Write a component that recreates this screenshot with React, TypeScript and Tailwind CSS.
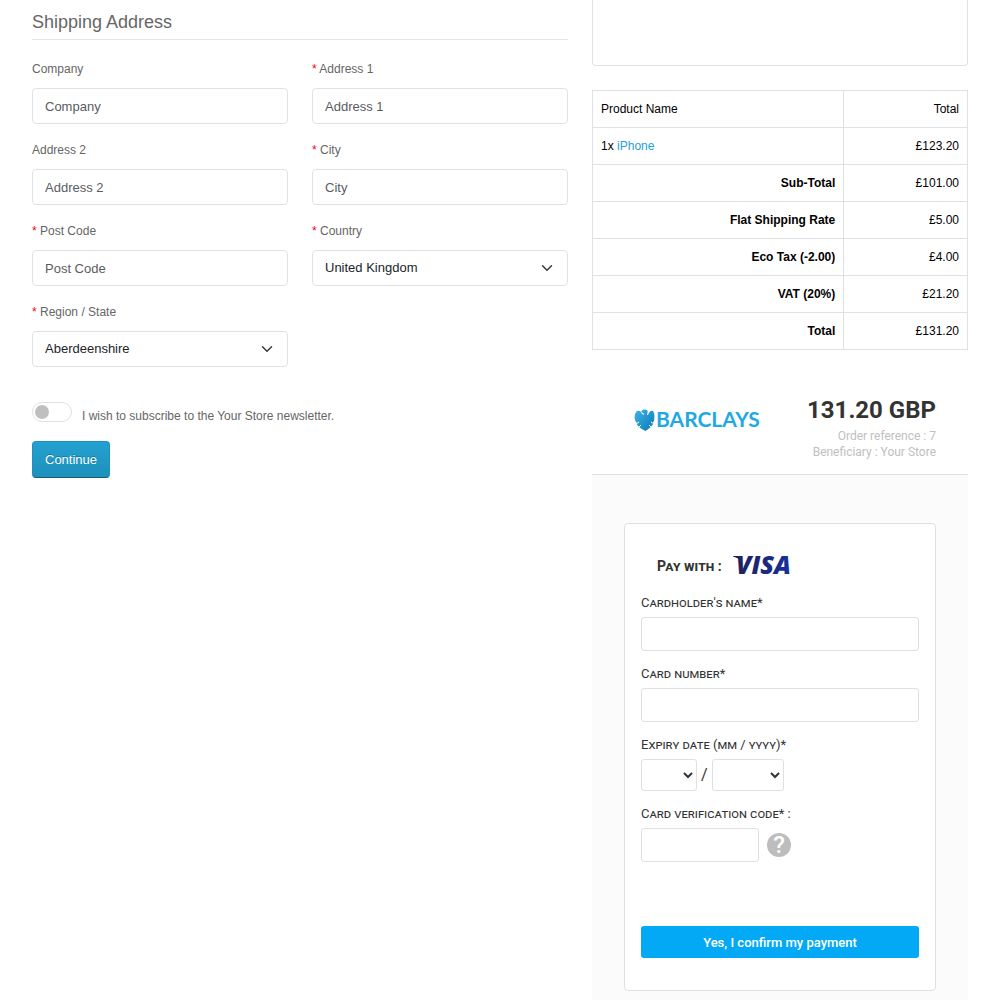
import { useState } from 'react';
import type { ReactNode } from 'react';

type FieldProps = {
  id: string;
  label: string;
  required?: boolean;
  children: ReactNode;
};

const controlClass =
  'block h-9 w-full rounded-sm border border-[#dee2e6] bg-white px-3 text-[13px] outline-none focus:border-[#86b7fe]';

const payInputClass =
  'block h-[34px] rounded-[3px] border border-[#e0e0e0] bg-white px-2 text-sm outline-none focus:border-[#03a9f4]';

const payLabelClass = 'mb-1 block text-[13px] leading-5 [font-variant:small-caps]';

const Field = ({ id, label, required, children }: FieldProps) => (
  <div className="mb-4">
    <label htmlFor={id} className="mb-2 block text-xs leading-[21px]">
      {required && <span className="text-[#ff0000]">* </span>}
      {label}
    </label>
    {children}
  </div>
);

const TextField = ({ id, label, required }: Omit<FieldProps, 'children'>) => (
  <Field id={id} label={label} required={required}>
    <input
      id={id}
      type="text"
      placeholder={label}
      className={`${controlClass} placeholder:text-[#595c5f]`}
    />
  </Field>
);

const SelectField = ({
  id,
  label,
  options,
}: {
  id: string;
  label: string;
  options: string[];
}) => (
  <Field id={id} label={label} required>
    <div className="relative">
      <select id={id} className={`${controlClass} appearance-none text-[#212529]`}>
        {options.map((option) => (
          <option key={option}>{option}</option>
        ))}
      </select>
      <svg
        className="pointer-events-none absolute right-[15px] top-3 size-3"
        viewBox="0 0 16 16"
        fill="none"
        stroke="#343a40"
        strokeWidth="2"
        strokeLinecap="round"
        strokeLinejoin="round"
      >
        <path d="m2 5 6 6 6-6" />
      </svg>
    </div>
  </Field>
);

const ShippingForm = () => {
  const [newsletter, setNewsletter] = useState(false);

  return (
    <form onSubmit={(e) => e.preventDefault()}>
      <h2 className="mb-[19px] border-b border-[#e5e5e5] pb-1 pt-[9px] text-lg leading-[26px]">
        Shipping Address
      </h2>
      <div className="grid grid-cols-2 gap-x-6">
        <TextField id="company" label="Company" />
        <TextField id="address-1" label="Address 1" required />
        <TextField id="address-2" label="Address 2" />
        <TextField id="city" label="City" required />
        <TextField id="postcode" label="Post Code" required />
        <SelectField
          id="country"
          label="Country"
          options={['United Kingdom', 'Ireland', 'France']}
        />
        <SelectField
          id="zone"
          label="Region / State"
          options={['Aberdeenshire', 'Aberdeen', 'Angus']}
        />
      </div>
      <div className="mt-[19px] flex items-start gap-[10px]">
        <input
          id="newsletter"
          type="checkbox"
          role="switch"
          checked={newsletter}
          onChange={(e) => setNewsletter(e.target.checked)}
          className="flex h-5 w-10 appearance-none items-center rounded-full border border-[#dee2e6] bg-white px-[2px] before:size-[14px] before:rounded-full before:bg-[#bfbfbf] checked:justify-end checked:bg-[#23a1d1] checked:before:bg-white"
        />
        <label htmlFor="newsletter" className="pt-1 text-xs leading-5">
          I wish to subscribe to the Your Store newsletter.
        </label>
      </div>
      <button
        type="submit"
        className="mt-[15px] h-[37px] rounded-sm border border-[#1f90bb] border-b-[#145e7a] bg-linear-to-b from-[#23a1d1] to-[#1f90bb] px-3 text-[13px] text-white [text-shadow:0_-1px_0_rgba(0,0,0,0.25)]"
      >
        Continue
      </button>
    </form>
  );
};

const totals = [
  { title: 'Sub-Total', value: '£101.00' },
  { title: 'Flat Shipping Rate', value: '£5.00' },
  { title: 'Eco Tax (-2.00)', value: '£4.00' },
  { title: 'VAT (20%)', value: '£21.20' },
  { title: 'Total', value: '£131.20' },
];

const cellClass = 'border border-[#dee2e6] p-2 leading-5';

const OrderTable = () => (
  <table className="w-full border-collapse text-xs text-black">
    <thead>
      <tr>
        <th className={`${cellClass} w-[67%] text-left font-normal`}>Product Name</th>
        <th className={`${cellClass} text-right font-normal`}>Total</th>
      </tr>
    </thead>
    <tbody>
      <tr>
        <td className={cellClass}>
          1x{' '}
          <a href="#iphone" className="text-[#23a1d1]">
            iPhone
          </a>
        </td>
        <td className={`${cellClass} text-right`}>£123.20</td>
      </tr>
      {totals.map((row) => (
        <tr key={row.title}>
          <th scope="row" className={`${cellClass} text-right font-bold`}>
            {row.title}
          </th>
          <td className={`${cellClass} text-right`}>{row.value}</td>
        </tr>
      ))}
    </tbody>
  </table>
);

const BarclaysLogo = () => (
  <svg
    className="h-6 w-[130px] overflow-visible"
    viewBox="0 0 130 24"
    role="img"
    aria-label="Barclays"
  >
    <defs>
      <linearGradient id="eagle" x1="0" y1="0" x2="1" y2="1">
        <stop offset="0" stopColor="#3db4e7" />
        <stop offset="1" stopColor="#0a78b5" />
      </linearGradient>
    </defs>
    <path
      fill="url(#eagle)"
      d="M3 3c2-1 4 0 5 3l2 1c0-2-1-2-3-3 1-2 3-3 5-2 2 0 2 2 1 5l1 0c1-3 3-5 5-4 2 3 1.500 6 1 10l-1 1 .5 1c-1 3-4 5-8 8-4-2-7-4-9-7l.5-1-1-1C0 10 0 6 3 3z"
    />
    <path stroke="#fff" strokeWidth="1" fill="none" d="m2 16 3-2m0 5 2-2m13-1-3-2m0 5-2-2" />
    <text x="22" y="19" fill="#1fa9e4" fontFamily="Lato, sans-serif" fontSize="21" fontWeight="700">
      BARCLAYS
    </text>
  </svg>
);

const VisaLogo = () => (
  <svg className="h-6 w-16 overflow-visible" viewBox="0 0 64 24" role="img" aria-label="Visa">
    <defs>
      <linearGradient id="visa" x1="0" y1="0" x2="1" y2="0">
        <stop offset="0" stopColor="#20205c" />
        <stop offset="1" stopColor="#14329c" />
      </linearGradient>
    </defs>
    <path fill="#20205c" d="M1 3h7l3 10C10 8 7 5 1 3.500z" />
    <text
      x="4"
      y="21"
      fill="url(#visa)"
      fontFamily="'Open Sans', sans-serif"
      fontSize="25"
      fontWeight="800"
      fontStyle="italic"
    >
      VISA
    </text>
  </svg>
);

const years = ['2024', '2025', '2026', '2027', '2028'];
const months = ['01', '02', '03', '04', '05', '06', '07', '08', '09', '10', '11', '12'];

const PaymentPanel = () => (
  <section className="flex grow flex-col font-[Roboto,sans-serif] text-[#333333]">
    <header className="flex items-start justify-between border-b border-[#e0e0e0] px-8 pb-[14px] pt-11">
      <div className="ml-[10px] mt-[14px]">
        <BarclaysLogo />
      </div>
      <div className="text-right">
        <p className="mb-[2px] text-2xl font-bold leading-8">131.20 GBP</p>
        <div className="text-xs leading-4 text-[#c0c0c0]">
          <p>Order reference : 7</p>
          <p>Beneficiary : Your Store</p>
        </div>
      </div>
    </header>
    <div className="grow bg-[#fbfbfb] px-8 pb-4 pt-12">
      <form
        onSubmit={(e) => e.preventDefault()}
        className="rounded-sm border border-[#e0e0e0] bg-white px-4 pb-8 pt-[29px]"
      >
        <div className="mb-4 flex h-6 items-center gap-[10px] pl-4">
          <span className="pt-[2px] text-sm font-bold [font-variant:small-caps]">Pay with :</span>
          <VisaLogo />
        </div>
        <label htmlFor="card-name" className={payLabelClass}>
          Cardholder's name*
        </label>
        <input id="card-name" type="text" className={`${payInputClass} mb-[13px] w-full`} />
        <label htmlFor="card-number" className={payLabelClass}>
          Card number*
        </label>
        <input id="card-number" type="text" className={`${payInputClass} mb-[13px] w-full`} />
        <label htmlFor="exp-month" className={payLabelClass}>
          Expiry date (mm / yyyy)*
        </label>
        <div className="mb-[13px] flex items-center gap-1">
          <select
            id="exp-month"
            className="h-8 w-14 rounded-[3px] border border-[#e0e0e0] bg-white text-sm"
          >
            <option></option>
            {months.map((month) => (
              <option key={month}>{month}</option>
            ))}
          </select>
          <span>/</span>
          <select
            aria-label="Expiry year"
            className="h-8 w-[72px] rounded-[3px] border border-[#e0e0e0] bg-white text-sm"
          >
            <option></option>
            {years.map((year) => (
              <option key={year}>{year}</option>
            ))}
          </select>
        </div>
        <label htmlFor="cvc" className={payLabelClass}>
          Card verification code* :
        </label>
        <div className="flex items-center gap-2">
          <input id="cvc" type="text" className={`${payInputClass} w-[118px]`} />
          <button
            type="button"
            aria-label="What is this?"
            className="flex size-6 items-center justify-center rounded-full bg-[#bdbdbd] text-2xl font-medium leading-6 text-white"
          >
            ?
          </button>
        </div>
        <button
          type="submit"
          className="mt-16 block h-8 w-full rounded-[3px] bg-[#03a9f4] pt-px text-[13px] font-medium text-white"
        >
          Yes, I confirm my payment
        </button>
      </form>
    </div>
  </section>
);

const App = () => {
  return (
    <main className="flex min-h-screen flex-wrap bg-white px-5 font-['Liberation_Sans',Arial,sans-serif] text-[#666666]">
      <div className="w-full px-3 md:w-7/12">
        <ShippingForm />
      </div>
      <div className="flex w-full flex-col px-3 md:w-5/12">
        <textarea
          aria-label="Comments"
          className="mb-6 block h-[66px] w-full resize-none rounded-b-sm border border-t-0 border-[#dee2e6] px-3 py-2 text-[13px] outline-none"
        />
        <OrderTable />
        <PaymentPanel />
      </div>
    </main>
  );
};

export default App;
